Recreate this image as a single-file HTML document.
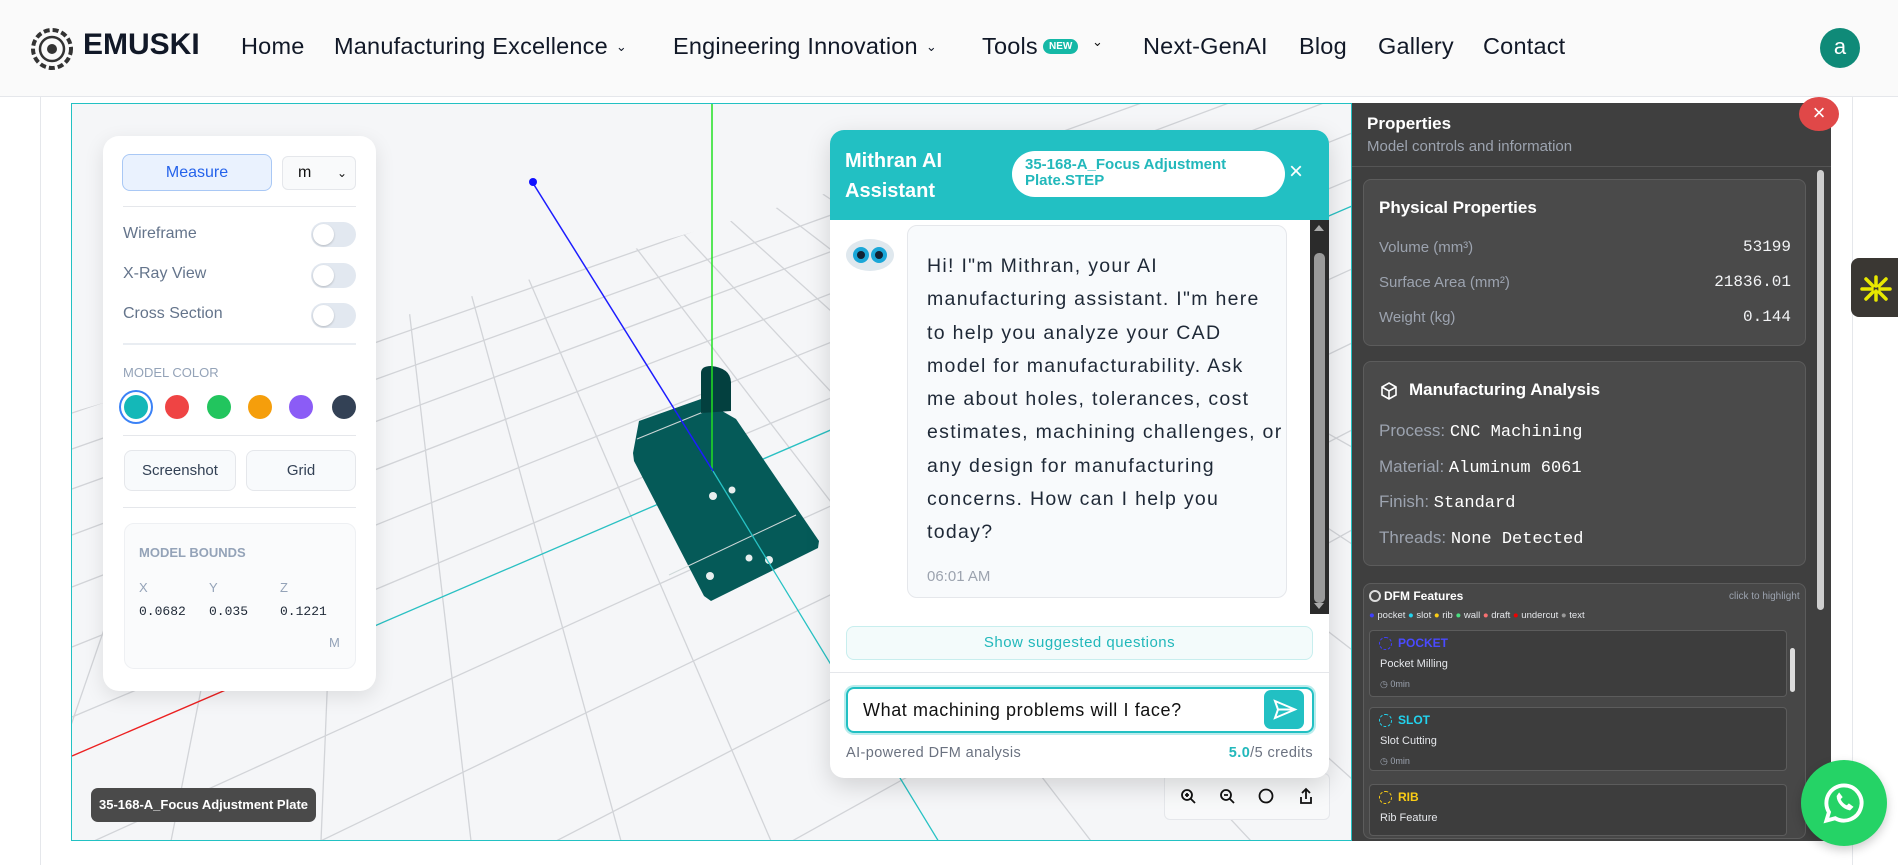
<!DOCTYPE html>
<html><head><meta charset="utf-8"><style>
*{box-sizing:border-box;margin:0;padding:0}
html,body{width:1898px;height:865px;overflow:hidden}
body{background:#fff;font-family:"Liberation Sans",sans-serif;position:relative;color:#1f2937}
.abs{position:absolute}
.nav{left:0;top:0;width:1898px;height:97px;background:#fafafa;border-bottom:1px solid #e5e7eb}
.nav .it{position:absolute;top:33px;font-size:23.5px;color:#111827;letter-spacing:0.2px}
.chev{font-size:13px;margin-left:8px;vertical-align:3px}
.mono{font-family:"Liberation Mono",monospace}
.tg{position:absolute;left:311px;width:45px;height:25px;border-radius:13px;background:#e2e8f0}
.tg:after{content:"";position:absolute;left:2px;top:2px;width:21px;height:21px;border-radius:50%;background:#fff;box-shadow:0 1px 2px rgba(0,0,0,.2)}
.lbl{position:absolute;left:123px;font-size:16px;color:#64748b}
.dot{position:absolute;width:24px;height:24px;border-radius:50%}
.card{position:absolute;left:1363px;width:443px;background:#4a4a4a;border:1px solid #5c5c5c;border-radius:8px}
.pr{position:absolute;font-size:15px;color:#9ca3af}
.pv{position:absolute;right:14px;font-size:16px;color:#f3f4f6;font-family:"Liberation Mono",monospace}
.fc{position:absolute;left:1369px;width:418px;background:#3d3d3d;border:1px solid #5c5c5c;border-radius:4px}
.fc b{position:absolute;left:28px;top:5px;font-size:12px}
.fc span{position:absolute;left:10px;top:27px;font-size:11px;color:#e5e7eb}
.fc i{position:absolute;left:10px;top:48px;font-size:9px;color:#9ca3af;font-style:normal}
.fc u{position:absolute;left:9px;top:6px;width:13px;height:13px;border-radius:50%;border:1.5px dashed}
</style></head><body>
<div class="abs nav">
 <svg class="abs" style="left:30px;top:27px" width="44" height="44" viewBox="0 0 44 44"><circle cx="22" cy="22" r="19" fill="none" stroke="#333" stroke-width="4" stroke-dasharray="6 3"/><circle cx="22" cy="22" r="12" fill="none" stroke="#333" stroke-width="2.5"/><circle cx="22" cy="22" r="5" fill="#333"/></svg>
 <div class="abs" style="left:83px;top:28px;font-size:30px;font-weight:bold;color:#111827">EMUSKI</div>
 <div class="it" style="left:241px">Home</div>
 <div class="it" style="left:334px">Manufacturing Excellence<span class="chev">&#8964;</span></div>
 <div class="it" style="left:673px">Engineering Innovation<span class="chev">&#8964;</span></div>
 <div class="it" style="left:982px">Tools</div>
 <div class="abs" style="left:1043px;top:39px;background:#14b8a6;color:#fff;font-size:10px;font-weight:bold;border-radius:9px;padding:2px 6px">NEW</div>
 <div class="abs" style="left:1092px;top:34px;font-size:13px;color:#111">&#8964;</div>
 <div class="it" style="left:1143px">Next-GenAI</div>
 <div class="it" style="left:1299px">Blog</div>
 <div class="it" style="left:1378px">Gallery</div>
 <div class="it" style="left:1483px">Contact</div>
 <div class="abs" style="left:1820px;top:28px;width:40px;height:40px;border-radius:50%;background:#0f8a78;color:#fff;font-size:22px;text-align:center;line-height:38px">a</div>
</div>
<div class="abs" style="left:40px;top:97px;width:1px;height:768px;background:#e5e7eb"></div>
<div class="abs" style="left:1852px;top:97px;width:1px;height:768px;background:#e5e7eb"></div>

<div class="abs" style="left:71px;top:103px;width:1281px;height:738px;border:1px solid #22c1c3;background:#f5f6f8;overflow:hidden">
<svg width="1281" height="738" viewBox="71 103 1281 738" style="display:block">
<defs><clipPath id="c"><polygon points="71,411 1351,40 1351,841 71,841"/></clipPath></defs>
<g clip-path="url(#c)" stroke="#d2d4d8" stroke-width="1.3" fill="none">
<line x1="71" y1="412" x2="1351" y2="-25"/><line x1="71" y1="448" x2="1351" y2="-1"/><line x1="71" y1="488" x2="1351" y2="26"/><line x1="71" y1="534" x2="1351" y2="56"/><line x1="71" y1="586" x2="1351" y2="91"/><line x1="71" y1="646" x2="1351" y2="132"/><line x1="71" y1="716" x2="1351" y2="178"/><line x1="71" y1="755" x2="1351" y2="205"/><line x1="71" y1="850" x2="1351" y2="268"/><line x1="71" y1="960" x2="1351" y2="342"/><line x1="71" y1="1090" x2="1351" y2="429"/><line x1="71" y1="1240" x2="1351" y2="529"/>
<line x1="359" y1="-113" x2="30" y2="840"/><line x1="359" y1="-113" x2="170" y2="840"/><line x1="359" y1="-113" x2="320" y2="840"/><line x1="359" y1="-113" x2="470" y2="840"/><line x1="359" y1="-113" x2="620" y2="840"/><line x1="359" y1="-113" x2="770" y2="840"/><line x1="359" y1="-113" x2="1090" y2="840"/><line x1="359" y1="-113" x2="1250" y2="840"/><line x1="359" y1="-113" x2="1420" y2="840"/><line x1="359" y1="-113" x2="1600" y2="840"/><line x1="359" y1="-113" x2="1800" y2="840"/><line x1="359" y1="-113" x2="2050" y2="840"/>
</g>
<line x1="71" y1="755" x2="320" y2="648" stroke="#ef2020" stroke-width="1.3"/>
<line x1="320" y1="648" x2="1351" y2="205" stroke="#27c2c4" stroke-width="1.3"/>
<polygon points="638,420 700,398 735,418 818,540 817,547 710,600 703,595 633,460 632,452" fill="#055a58"/>
<line x1="636" y1="438" x2="712" y2="407" stroke="#cfd8d8" stroke-width="1"/>
<line x1="668" y1="574" x2="795" y2="514" stroke="#cfd8d8" stroke-width="1"/>
<path d="M700,412 V372 Q700,365 710,365 Q730,367 730,382 V410 Z" fill="#03403f"/>
<g fill="#e8eeee"><circle cx="712" cy="495" r="4"/><circle cx="731" cy="489" r="3.5"/><circle cx="709" cy="575" r="4"/><circle cx="768" cy="559" r="4"/><circle cx="748" cy="557" r="3.5"/></g>
<line x1="712" y1="470" x2="938" y2="841" stroke="#27c2c4" stroke-width="1.3"/>
<line x1="711" y1="103" x2="711" y2="470" stroke="#22e022" stroke-width="1.5"/>
<line x1="530" y1="179" x2="712" y2="470" stroke="#1c1cff" stroke-width="1.5"/>
<circle cx="532" cy="181" r="4" fill="#1010ff"/>
</svg>
</div>

<div class="abs" style="left:103px;top:136px;width:273px;height:555px;background:#fff;border-radius:16px;box-shadow:0 6px 20px rgba(0,0,0,.1)"></div>
<div class="abs" style="left:122px;top:154px;width:150px;height:37px;background:#eaf2fe;border:1px solid #a9c8f5;border-radius:8px;color:#2563eb;font-size:16px;text-align:center;line-height:35px">Measure</div>
<div class="abs" style="left:282px;top:156px;width:74px;height:34px;border:1px solid #e5e7eb;background:#f9fafb;border-radius:6px;font-size:16px;line-height:32px;padding-left:15px;color:#111">m<span style="position:absolute;right:8px;font-size:12px">&#8964;</span></div>
<div class="abs" style="left:123px;top:206px;width:233px;height:1px;background:#e5e7eb"></div>
<div class="lbl" style="top:225px">Wireframe</div><div class="tg" style="top:222px"></div>
<div class="lbl" style="top:265px">X-Ray View</div><div class="tg" style="top:263px"></div>
<div class="lbl" style="top:305px">Cross Section</div><div class="tg" style="top:303px"></div>
<div class="abs" style="left:123px;top:343px;width:233px;height:2px;background:#e9edf2"></div>
<div class="abs" style="left:123px;top:365px;font-size:13px;color:#94a3b8">MODEL COLOR</div>
<div class="dot" style="left:124px;top:395px;background:#14b8b8;box-shadow:0 0 0 3px #fff,0 0 0 5px #3b82f6"></div>
<div class="dot" style="left:165px;top:395px;background:#ef4444"></div>
<div class="dot" style="left:207px;top:395px;background:#22c55e"></div>
<div class="dot" style="left:248px;top:395px;background:#f59e0b"></div>
<div class="dot" style="left:289px;top:395px;background:#8b5cf6"></div>
<div class="dot" style="left:332px;top:395px;background:#334155"></div>
<div class="abs" style="left:123px;top:435px;width:233px;height:1px;background:#e5e7eb"></div>
<div class="abs" style="left:124px;top:450px;width:112px;height:41px;border:1px solid #e5e7eb;background:#f8fafc;border-radius:8px;font-size:15px;text-align:center;line-height:39px;color:#334155">Screenshot</div>
<div class="abs" style="left:246px;top:450px;width:110px;height:41px;border:1px solid #e5e7eb;background:#f8fafc;border-radius:8px;font-size:15px;text-align:center;line-height:39px;color:#334155">Grid</div>
<div class="abs" style="left:123px;top:507px;width:233px;height:1px;background:#e5e7eb"></div>
<div class="abs" style="left:124px;top:523px;width:232px;height:146px;border:1px solid #eef0f3;background:#fafbfc;border-radius:10px"></div>
<div class="abs" style="left:139px;top:545px;font-size:13px;font-weight:bold;color:#94a3b8">MODEL BOUNDS</div>
<div class="abs" style="left:139px;top:580px;font-size:13px;color:#94a3b8">X</div><div class="abs" style="left:209px;top:580px;font-size:13px;color:#94a3b8">Y</div><div class="abs" style="left:280px;top:580px;font-size:13px;color:#94a3b8">Z</div>
<div class="abs mono" style="left:139px;top:604px;font-size:13px;color:#1f2937">0.0682</div><div class="abs mono" style="left:209px;top:604px;font-size:13px">0.035</div><div class="abs mono" style="left:280px;top:604px;font-size:13px">0.1221</div>
<div class="abs" style="left:329px;top:635px;font-size:13px;color:#94a3b8">M</div>
<div class="abs" style="left:91px;top:788px;width:225px;height:34px;background:#4a4a4a;border-radius:7px;color:#fff;font-size:13px;font-weight:bold;text-align:center;line-height:34px">35-168-A_Focus Adjustment Plate</div>

<div class="abs" style="left:1164px;top:773px;width:166px;height:47px;background:#f8f9fa;border:1px solid #e5e7eb;border-radius:6px"></div>
<svg class="abs" style="left:1175px;top:785px" width="150" height="22" viewBox="0 0 150 22" fill="none" stroke="#111" stroke-width="1.8"><circle cx="12" cy="10" r="5"/><path d="M16 14l4 4M10 10h4M12 8v4"/><circle cx="51" cy="10" r="5"/><path d="M55 14l4 4M49 10h4"/><circle cx="91" cy="11" r="6.5"/><path d="M131 4v10M127 8l4-4 4 4M126 12v6h10v-6"/></svg>

<div class="abs" style="left:830px;top:130px;width:499px;height:648px;background:#fff;border-radius:14px;box-shadow:0 8px 25px rgba(0,0,0,.15);overflow:hidden">
 <div style="position:absolute;left:0;top:0;width:499px;height:90px;background:#22c0c3"></div>
 <div style="position:absolute;left:15px;top:16px;color:#fff;font-size:20px;font-weight:bold;line-height:30px">Mithran AI<br>Assistant</div>
 <div style="position:absolute;left:182px;top:21px;width:273px;height:46px;background:#fff;border-radius:23px;color:#22b8bb;font-size:15px;font-weight:bold;line-height:16px;padding:6px 0 0 13px">35-168-A_Focus Adjustment<br>Plate.STEP</div>
 <div style="position:absolute;left:459px;top:28px;color:#fff;font-size:24px">&#215;</div>
 <div style="position:absolute;left:480px;top:90px;width:19px;height:394px;background:#2b2b2b"><div style="position:absolute;left:4px;top:33px;width:11px;height:350px;background:#9a9a9a;border-radius:5px"></div><div style="position:absolute;left:4px;top:5px;border:5px solid transparent;border-bottom:6px solid #aaa;border-top:0"></div><div style="position:absolute;left:4px;bottom:5px;border:5px solid transparent;border-top:6px solid #aaa;border-bottom:0"></div></div>
 <svg style="position:absolute;left:14px;top:106px" width="52" height="38" viewBox="0 0 52 38"><ellipse cx="26" cy="19" rx="24" ry="16" fill="#dfe8ee"/><circle cx="17" cy="19" r="8" fill="#1aa7d8"/><circle cx="35" cy="19" r="8" fill="#1aa7d8"/><circle cx="17" cy="19" r="4" fill="#123"/><circle cx="35" cy="19" r="4" fill="#123"/></svg>
 <div style="position:absolute;left:77px;top:95px;width:380px;height:373px;background:#f8fafc;border:1px solid #e5e7eb;border-radius:10px"></div>
 <div style="position:absolute;left:97px;top:120px;white-space:nowrap;font-size:19.5px;line-height:33.3px;letter-spacing:1.3px;color:#1f2937">Hi! I"m Mithran, your AI<br>manufacturing assistant. I"m here<br>to help you analyze your CAD<br>model for manufacturability. Ask<br>me about holes, tolerances, cost<br>estimates, machining challenges, or<br>any design for manufacturing<br>concerns. How can I help you<br>today?</div>
 <div style="position:absolute;left:97px;top:438px;font-size:15px;color:#9ca3af">06:01 AM</div>
 <div style="position:absolute;left:16px;top:496px;width:467px;height:34px;background:#f3fbfb;border:1px solid #c8eeee;border-radius:8px;color:#22b8bb;font-size:15px;text-align:center;line-height:32px;letter-spacing:0.5px">Show suggested questions</div>
 <div style="position:absolute;left:0;top:542px;width:499px;height:1px;background:#e5e7eb"></div>
 <div style="position:absolute;left:16px;top:557px;width:468px;height:46px;border:2px solid #22c0c3;border-radius:8px;box-shadow:0 0 0 2px #b8ecec;font-size:18px;line-height:42px;padding-left:15px;color:#111;letter-spacing:0.6px">What machining problems will I face?</div>
 <div style="position:absolute;left:434px;top:560px;width:40px;height:39px;background:#22c0c3;border-radius:7px"><svg width="40" height="39" viewBox="0 0 40 39" fill="none" stroke="#fff" stroke-width="2"><path d="M11 11l20 8.5-20 8.5 3-8.5zM14 19.5h17"/></svg></div>
 <div style="position:absolute;left:16px;top:615px;font-size:14.5px;color:#6b7280;letter-spacing:0.4px">AI-powered DFM analysis</div>
 <div style="position:absolute;right:16px;top:615px;font-size:14.5px;color:#6b7280;letter-spacing:0.4px"><b style="color:#22b8bb">5.0</b>/5 credits</div>
</div>

<div class="abs" style="left:1352px;top:103px;width:479px;height:738px;background:#3f3f3f"></div>
<div class="abs" style="left:1352px;top:166px;width:479px;height:1px;background:#555"></div>
<div class="abs" style="left:1367px;top:114px;font-size:17px;font-weight:bold;color:#fff">Properties</div>
<div class="abs" style="left:1367px;top:138px;font-size:15px;color:#9ca3af">Model controls and information</div>
<div class="abs" style="left:1799px;top:97px;width:40px;height:34px;border-radius:50%;background:#e04848;color:#fff;font-size:22px;text-align:center;line-height:32px">&#215;</div>
<div class="abs" style="left:1817px;top:170px;width:7px;height:440px;background:#cfcfcf;border-radius:4px"></div>
<div class="card" style="top:179px;height:167px">
 <div style="position:absolute;left:15px;top:18px;font-size:17px;font-weight:bold;color:#fff">Physical Properties</div>
 <div class="pr" style="left:15px;top:59px">Volume (mm³)</div><div class="pv" style="top:58px">53199</div>
 <div class="pr" style="left:15px;top:94px">Surface Area (mm²)</div><div class="pv" style="top:93px">21836.01</div>
 <div class="pr" style="left:15px;top:129px">Weight (kg)</div><div class="pv" style="top:128px">0.144</div>
</div>
<div class="card" style="top:361px;height:205px">
 <svg style="position:absolute;left:15px;top:19px" width="20" height="20" viewBox="0 0 20 20" fill="none" stroke="#fff" stroke-width="1.6"><path d="M10 2l7 4v8l-7 4-7-4V6zM3 6l7 4 7-4M10 10v8"/></svg>
 <div style="position:absolute;left:45px;top:18px;font-size:17px;font-weight:bold;color:#fff">Manufacturing Analysis</div>
 <div class="pr" style="left:15px;top:59px;font-size:17px">Process: <span class="mono" style="color:#fff;font-size:17px">CNC Machining</span></div>
 <div class="pr" style="left:15px;top:95px;font-size:17px">Material: <span class="mono" style="color:#fff;font-size:17px">Aluminum 6061</span></div>
 <div class="pr" style="left:15px;top:130px;font-size:17px">Finish: <span class="mono" style="color:#fff;font-size:17px">Standard</span></div>
 <div class="pr" style="left:15px;top:166px;font-size:17px">Threads: <span class="mono" style="color:#fff;font-size:17px">None Detected</span></div>
</div>
<div class="card" style="top:583px;height:256px;background:#474747"></div>
<div class="abs" style="left:1369px;top:590px;width:12px;height:12px;border-radius:50%;border:2px double #ddd"></div>
<div class="abs" style="left:1384px;top:589px;font-size:12px;font-weight:bold;color:#fff">DFM Features</div>
<div class="abs" style="left:1729px;top:591px;font-size:10px;color:#9ca3af">click to highlight</div>
<div class="abs" style="left:1369px;top:610px;font-size:9.5px;color:#e5e7eb;white-space:nowrap"><span style="color:#4040ff">●</span> pocket <span style="color:#22d3ee">●</span> slot <span style="color:#facc15">●</span> rib <span style="color:#4ade80">●</span> wall <span style="color:#f87171">●</span> draft <span style="color:#ef0000">●</span> undercut <span style="color:#999">●</span> text</div>
<div class="fc" style="top:630px;height:67px"><u style="border-color:#4040ff"></u><b style="color:#4a4aff">POCKET</b><span>Pocket Milling</span><i>◷ 0min</i></div>
<div class="fc" style="top:707px;height:64px"><u style="border-color:#22d3ee"></u><b style="color:#22d3ee">SLOT</b><span>Slot Cutting</span><i>◷ 0min</i></div>
<div class="fc" style="top:784px;height:52px"><u style="border-color:#facc15"></u><b style="color:#facc15">RIB</b><span>Rib Feature</span></div>
<div class="abs" style="left:1790px;top:648px;width:5px;height:44px;background:#ddd;border-radius:3px"></div>
<div class="abs" style="left:1851px;top:258px;width:47px;height:59px;background:#3a3733;border-radius:8px 0 0 8px"><svg width="47" height="59" viewBox="0 0 47 59" stroke="#e8e800" stroke-width="3.5" stroke-linecap="round"><path d="M25 19v9M25 33v9M11 31h10M29 31h10M15 21l7 7M28 34l7 7M35 21l-7 7M22 34l-7 7"/></svg></div>
<div class="abs" style="left:1801px;top:760px;width:86px;height:86px;border-radius:50%;background:#25d366;box-shadow:0 4px 10px rgba(0,0,0,.2)"><svg width="86" height="86" viewBox="0 0 88 88" fill="none" stroke="#fff" stroke-width="4"><path d="M44 26a18 18 0 1 1-9 33.6L26 62l2.6-8.6A18 18 0 0 1 44 26z"/><path d="M37 37c0 6 6 13 13 14l3-3-4-3-2 2c-3-1-6-4-7-7l2-2-3-4z" fill="#fff" stroke-width="1"/></svg></div>
</body></html>
